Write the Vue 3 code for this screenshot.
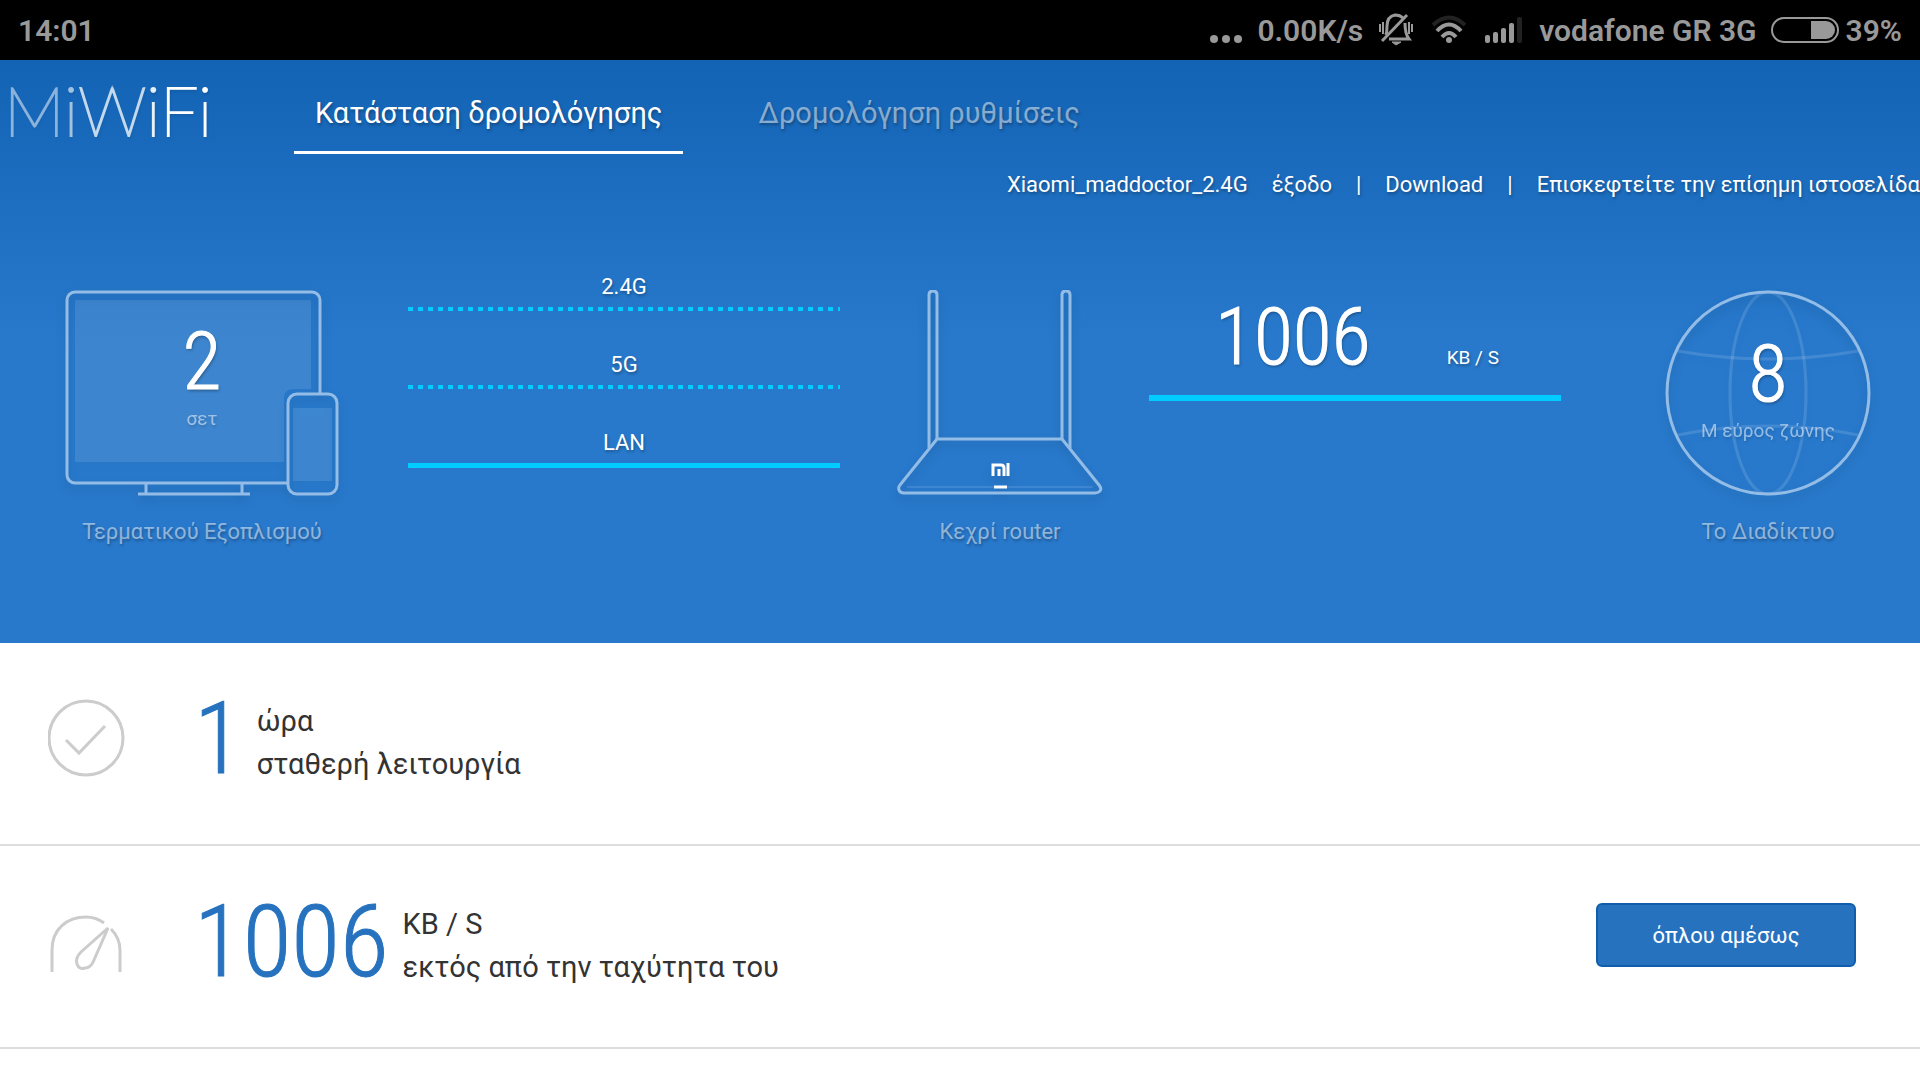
<script setup>
import { ref } from "vue";

const tabs = ref([
  { id: 1, texto: "Κατάσταση δρομολόγησης" },
  { id: 2, texto: "Δρομολόγηση ρυθμίσεις" }
]);
const activeTab = ref(1);

const bands = ref([
  { name: "2.4G", connected: false },
  { name: "5G", connected: false },
  { name: "LAN", connected: true }
]);

const speed = ref(1006);
const devices = ref(2);
const bandwidth = ref(8);
const hours = ref(1);
</script>

<template>
  <div class="screen">
    <div class="statusbar">
      <span class="clock">14:01</span>
      <div class="status-right">
        <svg class="dots" width="34" height="36" viewBox="0 0 34 36">
          <circle cx="5" cy="27" r="4" />
          <circle cx="17" cy="27" r="4" />
          <circle cx="29" cy="27" r="4" />
        </svg>
        <span class="rate">0.00K/s</span>
        <svg class="bell" width="34" height="36" viewBox="0 0 34 36" fill="none" stroke="#999" stroke-width="2">
          <path d="M7 23c1-3 1-6 1-9C8 8 11 4 16 3c4 0 6 1 8 3M26 11c0 5 0 11 4 16H10" stroke-width="3" />
          <path d="M3 29L28 3" stroke-width="3" />
          <path d="M1 12v8M4 10v12M30 10v12M33 12v8" />
          <path d="M13 30h9l-5 3z" fill="#999" stroke-width="1" />
        </svg>
        <svg class="wifi" width="36" height="36" viewBox="0 0 36 36" fill="none" stroke="#999" stroke-width="4">
          <path d="M2 13Q18-2 34 13" stroke="#222" />
          <path d="M6 19Q18 6 30 19" />
          <path d="M11 25Q18 17 25 25" />
          <circle cx="18" cy="28" r="3" fill="#999" stroke="none" />
        </svg>
        <svg class="signal" width="38" height="36" viewBox="0 0 38 36">
          <rect x="0" y="23" width="5" height="8" rx="2" />
          <rect x="8" y="20" width="5" height="11" rx="2" />
          <rect x="16" y="16" width="5" height="15" rx="2" />
          <rect x="24" y="11" width="5" height="20" rx="2" />
          <rect x="32" y="5" width="5" height="26" rx="2" fill="#222" />
        </svg>
        <span class="carrier">vodafone GR 3G</span>
        <svg class="battery" width="68" height="36" viewBox="0 0 68 36">
          <rect x="1" y="6" width="66" height="24" rx="12" fill="none" stroke="#999" stroke-width="2" />
          <path d="M40 9h15a9 9 0 0 1 0 18H40z" />
        </svg>
        <span class="percent">39%</span>
      </div>
    </div>

    <header class="header">
      <div class="topnav">
        <a href="#" class="logo"><span class="fade1">M</span><span class="fade2">i</span><span class="fade3">W</span><span class="fade4">i</span><span>Fi</span></a>
        <nav class="tabs">
          <a
            v-for="tab in tabs"
            :key="tab.id"
            href="#"
            class="tab"
            :class="{ active: tab.id === activeTab }"
            @click.prevent="activeTab = tab.id"
          >{{ tab.texto }}</a>
        </nav>
      </div>

      <div class="links">
        <span>Xiaomi_maddoctor_2.4G</span>
        <a href="#">έξοδο</a>
        <span>|</span>
        <a href="#">Download</a>
        <span>|</span>
        <a href="#">Επισκεφτείτε την επίσημη ιστοσελίδα</a>
      </div>

      <div class="diagram">
        <div class="node">
          <div class="picture">
            <svg width="274" height="208" viewBox="0 0 274 208" fill="none" stroke="#93bce6" stroke-width="3">
              <path d="M10 10h236v89h-17q-10 0-10 9v64H10z" fill="#fff" fill-opacity=".1" stroke="none" />
              <path d="M222 193H10a8 8 0 0 1-8-8V10a8 8 0 0 1 8-8h237a8 8 0 0 1 8 8v94" />
              <path d="M81 193v11M177 193v11M73 204h112" />
              <rect x="223" y="104" width="49" height="100" rx="9" />
              <rect x="228" y="118" width="39" height="73" fill="#fff" fill-opacity=".1" stroke="none" />
            </svg>
            <div class="caption devices">
              <strong class="number">{{ devices }}</strong>
              <span>σετ</span>
            </div>
          </div>
          <p class="label">Τερματικού Εξοπλισμού</p>
        </div>

        <div class="bands">
          <div v-for="band in bands" :key="band.name" class="band">
            <span>{{ band.name }}</span>
            <i class="line" :class="{ dashed: !band.connected }"></i>
          </div>
        </div>

        <div class="node">
          <div class="picture">
            <svg width="206" height="208" viewBox="0 0 206 208" fill="none" stroke="#93bce6" stroke-width="3">
              <path d="M32 158V5q0-4 4-4t4 4v144" />
              <path d="M165 149V5q0-4 4-4t4 4v153" />
              <path d="M40 149h125l37 46q3 4 1 6t-5 2H7q-4 0-5-3t1-5z" />
              <path d="M10 197h186" stroke="#fff" stroke-opacity=".1" stroke-width="2" />
              <path d="M96 186v-11h8q3 0 3 3v8M102 179v7M111 173v13" stroke="#fff" />
              <path d="M97 197h13" stroke="#fff" />
            </svg>
          </div>
          <p class="label">Κεχρί router</p>
        </div>

        <div class="speed">
          <div class="speed-value">
            <strong class="number">{{ speed }}</strong>
            <span>KB / S</span>
          </div>
          <i class="line"></i>
        </div>

        <div class="node">
          <div class="picture">
            <svg width="206" height="208" viewBox="0 0 206 208" fill="none" stroke="#93bce6" stroke-width="3">
              <g stroke="#fff" stroke-opacity=".12">
                <ellipse cx="103" cy="103" rx="38" ry="101" />
                <path d="M13 61q90 16 180 0M13 145q90-18 180 0" />
              </g>
              <circle cx="103" cy="103" r="101" />
            </svg>
            <div class="caption net">
              <strong class="number">{{ bandwidth }}</strong>
              <span>M εύρος ζώνης</span>
            </div>
          </div>
          <p class="label">Το Διαδίκτυο</p>
        </div>
      </div>
    </header>

    <main>
      <section class="row">
        <svg class="row-icon" width="78" height="78" viewBox="0 0 78 78" fill="none" stroke="#ccc" stroke-width="3">
          <circle cx="38" cy="39" r="37" />
          <path d="M18 41l13 13 26-27" stroke-linejoin="miter" />
        </svg>
        <strong class="number big">{{ hours }}</strong>
        <div class="info">
          <p>ώρα</p>
          <p>σταθερή λειτουργία</p>
        </div>
      </section>

      <section class="row">
        <svg class="row-icon" width="78" height="78" viewBox="0 0 78 78" fill="none" stroke="#ccc" stroke-width="3">
          <path d="M4 70V48C4 27 19 15 38 15q10 0 18 6" />
          <path d="M63 27q9 9 9 21v22" />
          <path d="M60 26L33 50q-6 6-4 12t8 4q6 0 9-8z" />
        </svg>
        <strong class="number big">{{ speed }}</strong>
        <div class="info">
          <p>KB / S</p>
          <p>εκτός από την ταχύτητα του</p>
        </div>
        <button type="button" class="btn">όπλου αμέσως</button>
      </section>
    </main>
  </div>
</template>

<style>
body {
  background: #fff;
  overflow-x: hidden;
}
</style>

<style scoped>
.screen {
  font-family: Roboto, "Noto Sans", sans-serif;
  color: #333;
}

a {
  color: inherit;
  text-decoration: none;
}

p {
  margin: 0;
}

.statusbar {
  display: flex;
  justify-content: space-between;
  align-items: center;
  height: 60px;
  padding: 0 18px;
  background: #000;
  color: #999;
  font-size: 30px;
  font-weight: 600;
}

.status-right {
  display: flex;
  align-items: center;
}

.status-right svg {
  fill: #999;
}

.status-right svg[fill="none"] {
  fill: none;
}

.rate {
  margin: 0 16px 0 14px;
}

.wifi {
  margin: 0 18px;
}

.carrier {
  margin: 0 14px 0 16px;
}

.percent {
  margin-left: 7px;
}

.header {
  height: 583px;
  background: linear-gradient(#1263b4, #2879cc 280px);
  color: #fff;
  text-shadow: 1px 2px 3px rgba(0, 0, 0, 0.3);
}

.topnav {
  display: flex;
  height: 94px;
}

.logo {
  width: 286px;
  padding: 8px 0 0 4px;
  box-sizing: border-box;
  font-family: Lato, sans-serif;
  font-size: 68px;
  font-weight: 100;
  line-height: 84px;
  -webkit-text-stroke: 2px #fff;
}

.fade1 {
  opacity: 0.5;
}

.fade2 {
  opacity: 0.6;
}

.fade3 {
  opacity: 0.75;
}

.fade4 {
  opacity: 0.9;
}

.tabs {
  display: flex;
  gap: 54px;
  padding-left: 8px;
}

.tab {
  padding: 15px 21px 0;
  border-bottom: 3px solid transparent;
  font-size: 29px;
  line-height: 76px;
  color: rgba(255, 255, 255, 0.5);
}

.tab.active {
  color: #fff;
  border-color: #fff;
}

.links {
  display: flex;
  justify-content: flex-end;
  gap: 24px;
  padding-top: 15px;
  font-size: 22px;
  line-height: 32px;
  white-space: nowrap;
}

.diagram {
  display: grid;
  grid-template-columns: 274px 558fr 206px 562fr 206px;
  padding: 73px 49px 0 65px;
}

.node {
  padding-top: 16px;
  text-align: center;
}

.picture {
  position: relative;
  height: 208px;
}

.picture svg {
  display: block;
  filter: drop-shadow(0 5px 5px rgba(0, 0, 0, 0.15));
}

.caption {
  position: absolute;
  inset: 0;
  display: flex;
  flex-direction: column;
  align-items: center;
  gap: 5px;
  font-size: 19px;
  line-height: 24px;
}

.caption span {
  opacity: 0.5;
}

.devices {
  padding-top: 32px;
}

.net {
  padding-top: 44px;
}

.number {
  font-family: "Roboto Condensed", Roboto, sans-serif;
  font-size: 80px;
  font-weight: 300;
  line-height: 80px;
  -webkit-text-stroke: 1px currentColor;
}

.label {
  margin-top: 18px;
  font-size: 22px;
  line-height: 32px;
  color: rgba(255, 255, 255, 0.5);
}

.bands {
  margin: 0 57px 0 69px;
}

.band {
  height: 78px;
  text-align: center;
  font-size: 22px;
}

.line {
  display: block;
  height: 5px;
  background: #00ccff;
}

.band .line {
  margin-top: 8px;
}

.line.dashed {
  height: 4px;
  background: repeating-linear-gradient(90deg, #00ccff 0 5px, transparent 5px 10px);
}

.speed {
  margin: 0 104px 0 46px;
  padding-top: 23px;
}

.speed-value {
  display: flex;
  align-items: baseline;
  gap: 76px;
  padding-left: 66px;
  font-size: 19px;
}

.speed .line {
  height: 6px;
  margin-top: 18px;
}

.row {
  display: flex;
  align-items: flex-start;
  height: 203px;
  padding: 0 64px 0 48px;
  box-sizing: border-box;
  border-bottom: 2px solid #ddd;
}

.row-icon {
  margin: 56px 68px 0 0;
}

.big {
  margin: 48px 14px 0 0;
  font-size: 100px;
  line-height: 96px;
  color: #2672be;
}

.info {
  padding-top: 57px;
  font-size: 29px;
  line-height: 43px;
}

.btn {
  width: 260px;
  height: 64px;
  margin: 57px 0 0 auto;
  border: 2px solid #0f5dac;
  border-radius: 6px;
  background: #2672be;
  color: #fff;
  font-family: inherit;
  font-size: 22px;
}
</style>
